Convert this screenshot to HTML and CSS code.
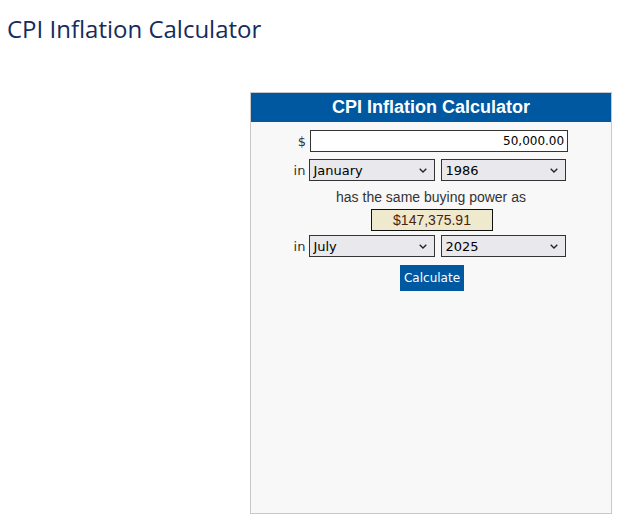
FILE: index.html
```html
<!DOCTYPE html>
<html>
<head>
<meta charset="utf-8">
<link rel="stylesheet" href="styles.css">
</head>
<body>
<h1 class="page-title">CPI Inflation Calculator</h1>
<div class="layout">
  <div class="calc">
    <div class="calc-head">CPI Inflation Calculator</div>
    <div class="calc-body">
      <div class="row row-amount">
        <span class="lbl">$</span>
        <input class="amount" type="text" value="50,000.00">
      </div>
      <div class="row row-date">
        <span class="lbl">in</span>
        <select class="sel month"><option>January</option></select>
        <select class="sel year"><option>1986</option></select>
      </div>
      <div class="same">has the same buying power as</div>
      <div class="result">$147,375.91</div>
      <div class="row row-date">
        <span class="lbl">in</span>
        <select class="sel month"><option>July</option></select>
        <select class="sel year"><option>2025</option></select>
      </div>
      <button class="calc-btn">Calculate</button>
    </div>
  </div>
</div>
</body>
</html>
```
FILE: styles.css
```css
html, body { margin: 0; padding: 0; background: #fff; }
body { font-family: "Liberation Sans", Arial, sans-serif; }
.page-title {
  margin: 0;
  padding: 14px 0 0 7px;
  font-family: "Open Sans", "DejaVu Sans", sans-serif;
  font-weight: normal;
  font-size: 24px;
  line-height: 30px;
  color: #152c5c;
}
.layout {
  display: flex;
  justify-content: flex-end;
  padding: 48px 8px 0 0;
}
.calc {
  width: 360px;
  height: 420px;
  border: 1px solid #c8c8c8;
  background: #f8f8f8;
}
.calc-head {
  background: #0059a0;
  color: #fff;
  font-weight: bold;
  font-size: 18px;
  text-align: center;
  height: 29px;
  line-height: 29px;
}
.calc-body {
  display: flex;
  flex-direction: column;
  align-items: center;
  padding: 8px 0 0 0;
  color: #333;
  font-size: 14px;
}
.row {
  display: flex;
  align-items: center;
  gap: 4px;
  height: 22px;
  margin-bottom: 7px;
}
.row-amount { margin-left: 4px; }
.row-date { margin-left: -2px; }
.lbl { font-family: "DejaVu Sans", sans-serif; font-size: 13px; color: #333; }
.amount {
  box-sizing: border-box;
  width: 258px;
  height: 22px;
  border: 1px solid #333;
  background: #fff;
  text-align: right;
  padding: 0 3px;
  font-family: "DejaVu Sans", sans-serif;
  font-size: 12px;
  color: #000;
  outline: none;
}
.sel {
  -webkit-appearance: none;
  appearance: none;
  box-sizing: border-box;
  height: 22px;
  border: 1px solid #333;
  background-color: #e9e9ed;
  background-image: url("data:image/svg+xml;utf8,<svg xmlns='http://www.w3.org/2000/svg' width='8' height='5' viewBox='0 0 8 5'><path d='M0.7 0.7 L4 4 L7.3 0.7' fill='none' stroke='%23222' stroke-width='1.3'/></svg>");
  background-repeat: no-repeat;
  background-position: right 7px center;
  padding: 0 3px;
  font-family: "DejaVu Sans", sans-serif;
  font-size: 13px;
  color: #000;
  border-radius: 0;
}
.month { width: 126px; }
.year { width: 125px; margin-left: 2px; }
.same { line-height: 18px; margin-top: 0; }
.result {
  box-sizing: border-box;
  width: 122px;
  height: 22px;
  line-height: 20px;
  margin: 3px 0 4px 2px;
  border: 1px solid #111;
  background: #efe9cd;
  color: #4a2410;
  text-align: center;
  font-size: 14px;
}
.calc-btn {
  width: 64px;
  height: 26px;
  border: none;
  background: #0059a0;
  color: #fff;
  font-family: "DejaVu Sans", sans-serif;
  font-size: 12px;
  padding: 0;
  margin: 1px 0 0 2px;
}
```
